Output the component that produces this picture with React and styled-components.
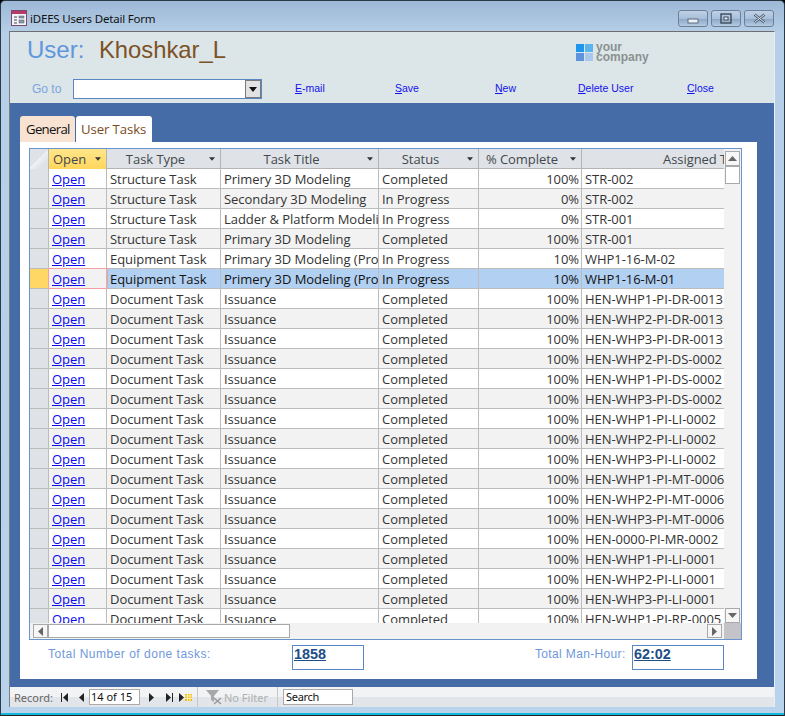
import React from 'react'
import styled, { createGlobalStyle } from 'styled-components'

const COLUMNS = '19px 58px 114px 158px 100px 103px 142px'

const doc = (code) => ({ type: 'Document Task', title: 'Issuance', status: 'Completed', pct: '100%', code })

const rows = [
  { type: 'Structure Task', title: 'Primery 3D Modeling', status: 'Completed', pct: '100%', code: 'STR-002' },
  { type: 'Structure Task', title: 'Secondary 3D Modeling', status: 'In Progress', pct: '0%', code: 'STR-002' },
  { type: 'Structure Task', title: 'Ladder & Platform Modeling', status: 'In Progress', pct: '0%', code: 'STR-001' },
  { type: 'Structure Task', title: 'Primary 3D Modeling', status: 'Completed', pct: '100%', code: 'STR-001' },
  { type: 'Equipment Task', title: 'Primary 3D Modeling (Process)', status: 'In Progress', pct: '10%', code: 'WHP1-16-M-02' },
  { type: 'Equipment Task', title: 'Primery 3D Modeling (Process)', status: 'In Progress', pct: '10%', code: 'WHP1-16-M-01', selected: true },
  doc('HEN-WHP1-PI-DR-0013'),
  doc('HEN-WHP2-PI-DR-0013'),
  doc('HEN-WHP3-PI-DR-0013'),
  doc('HEN-WHP2-PI-DS-0002'),
  doc('HEN-WHP1-PI-DS-0002'),
  doc('HEN-WHP3-PI-DS-0002'),
  doc('HEN-WHP1-PI-LI-0002'),
  doc('HEN-WHP2-PI-LI-0002'),
  doc('HEN-WHP3-PI-LI-0002'),
  doc('HEN-WHP1-PI-MT-0006'),
  doc('HEN-WHP2-PI-MT-0006'),
  doc('HEN-WHP3-PI-MT-0006'),
  doc('HEN-0000-PI-MR-0002'),
  doc('HEN-WHP1-PI-LI-0001'),
  doc('HEN-WHP2-PI-LI-0001'),
  doc('HEN-WHP3-PI-LI-0001'),
  doc('HEN-WHP1-PI-RP-0005'),
]

function App() {
  return (
    <Window>
      <GlobalStyle />
      <TitleBar>
        <FormIcon />
        <TitleText>iDEES Users Detail Form</TitleText>
        <WindowButtons>
          <WinButton>
            <MinIcon width="12" height="6"><rect x="1" y="1" width="10" height="4" fill="#eef2f7" stroke="#5a6a80" /></MinIcon>
          </WinButton>
          <WinButton>
            <svg width="12" height="11"><rect x="1" y="1" width="10" height="9" fill="none" stroke="#3c4a5c" strokeWidth="1.4" /><rect x="4" y="4" width="4" height="3" fill="#eef2f7" stroke="#3c4a5c" /></svg>
          </WinButton>
          <WinButton>
            <svg width="13" height="11"><path d="M1.5 1.5 L11.5 9.5 M11.5 1.5 L1.5 9.5" stroke="#4a5a70" strokeWidth="2.6" /><path d="M1.5 1.5 L11.5 9.5 M11.5 1.5 L1.5 9.5" stroke="#e8eef5" strokeWidth="1" /></svg>
          </WinButton>
        </WindowButtons>
      </TitleBar>
      <Form>
        <Header>
          <UserLine>
            <UserLabel>User:</UserLabel>
            <UserName>Khoshkar_L</UserName>
            <Logo>
              <LogoSquares>
                <i /><i /><i /><i />
              </LogoSquares>
              <LogoText>your<br />company</LogoText>
            </Logo>
          </UserLine>
          <ActionLine>
            <GoTo>Go to</GoTo>
            <Combo>
              <ComboArrow>
                <svg width="8" height="5"><path d="M0 0 H8 L4 5 Z" fill="#111" /></svg>
              </ComboArrow>
            </Combo>
            <ActionLink $width={100} $left={33}><u>E</u>-mail</ActionLink>
            <ActionLink $width={100}><u>S</u>ave</ActionLink>
            <ActionLink $width={83}><u>N</u>ew</ActionLink>
            <ActionLink $width={109}><u>D</u>elete User</ActionLink>
            <ActionLink $width={60}><u>C</u>lose</ActionLink>
          </ActionLine>
        </Header>
        <Detail>
          <Tabs>
            <Tab>General</Tab>
            <Tab $active>User Tasks</Tab>
          </Tabs>
          <Page>
            <Grid>
              <GridBody>
                <Table>
                  <HeadRow>
                    <Corner />
                    <HeadCell $current>Open<Sort /></HeadCell>
                    <HeadCell>Task Type<Sort /></HeadCell>
                    <HeadCell>Task Title<Sort /></HeadCell>
                    <HeadCell>Status<Sort /></HeadCell>
                    <HeadCell>% Complete<Sort /></HeadCell>
                    <AssignedHead>Assigned To</AssignedHead>
                  </HeadRow>
                  {rows.map((r, i) => (
                    <Row key={i} $alt={i % 2 === 1} $selected={r.selected}>
                      <Selector $selected={r.selected} />
                      <OpenCell $selected={r.selected}><OpenLink>Open</OpenLink></OpenCell>
                      <Cell>{r.type}</Cell>
                      <Cell>{r.title}</Cell>
                      <Cell>{r.status}</Cell>
                      <PctCell>{r.pct}</PctCell>
                      <Cell>{r.code}</Cell>
                    </Row>
                  ))}
                </Table>
                <VScroll>
                  <ScrollBtn><Tri viewBox="0 0 9 5"><path d="M0 5 L4.5 0 L9 5 Z" /></Tri></ScrollBtn>
                  <VThumb />
                  <ScrollGap />
                  <ScrollBtn><Tri viewBox="0 0 9 5"><path d="M0 0 L4.5 5 L9 0 Z" /></Tri></ScrollBtn>
                </VScroll>
              </GridBody>
              <HScroll>
                <HBtn><TriSide viewBox="0 0 5 9"><path d="M5 0 L0 4.5 L5 9 Z" /></TriSide></HBtn>
                <HThumb />
                <ScrollGap />
                <HBtn><TriSide viewBox="0 0 5 9"><path d="M0 0 L5 4.5 L0 9 Z" /></TriSide></HBtn>
                <ScrollCorner />
              </HScroll>
            </Grid>
            <Totals>
              <TotalLabel>Total Number of done tasks:</TotalLabel>
              <TotalBox $width={72}>1858</TotalBox>
              <ManHourLabel>Total Man-Hour:</ManHourLabel>
              <TotalBox $width={92}>62:02</TotalBox>
            </Totals>
          </Page>
        </Detail>
        <NavBar>
          <NavLabel>Record:</NavLabel>
          <NavIcon $left={8}><svg width="8" height="9"><path d="M0.5 0 V9" stroke="#222" /><path d="M7 0 V9 L2 4.5 Z" fill="#222" /></svg></NavIcon>
          <NavIcon $left={10}><svg width="6" height="9"><path d="M5 0 V9 L0 4.5 Z" fill="#222" /></svg></NavIcon>
          <RecordBox>14 of 15</RecordBox>
          <NavIcon $left={9}><svg width="6" height="9"><path d="M0 0 V9 L5 4.5 Z" fill="#222" /></svg></NavIcon>
          <NavIcon $left={10}><svg width="8" height="9"><path d="M7.5 0 V9" stroke="#222" /><path d="M1 0 V9 L6 4.5 Z" fill="#222" /></svg></NavIcon>
          <NavIcon $left={6}>
            <svg width="13" height="9"><path d="M0 0 V9 L5 4.5 Z" fill="#222" /><rect x="6" y="1" width="7" height="7" fill="#e8b820" /><path d="M6 3 H13 M6 5.5 H13 M8.5 1 V8 M11 1 V8" stroke="#fff2b0" /></svg>
          </NavIcon>
          <NavSep $left={5} />
          <NavIcon $left={8}>
            <svg width="16" height="16"><path d="M0 1 H13 L8 7 V13 L5 11 V7 Z" fill="#a8a8a8" /><path d="M8 9 L15 15 M15 9 L8 15" stroke="#999" strokeWidth="1.5" /></svg>
          </NavIcon>
          <NoFilter>No Filter</NoFilter>
          <NavSep $left={9} />
          <SearchBox>Search</SearchBox>
        </NavBar>
      </Form>
    </Window>
  )
}

function FormIcon() {
  return (
    <svg width="16" height="16" viewBox="0 0 16 16">
      <rect x="0.5" y="0.5" width="15" height="15" fill="#f4f5f8" stroke="#7a4a6a" />
      <rect x="1" y="1" width="14" height="3" fill="#b83a66" />
      <path d="M3 7 H6 M3 10 H6 M3 13 H6" stroke="#445" />
      <rect x="8" y="6" width="5" height="2" fill="#8a9ab0" stroke="#556" strokeWidth="0.5" />
      <rect x="8" y="10" width="5" height="3" fill="#8a9ab0" stroke="#556" strokeWidth="0.5" />
    </svg>
  )
}

function Sort() {
  return <SortMark viewBox="0 0 7 4"><path d="M0 0 H7 L3.5 4 Z" /></SortMark>
}

const GlobalStyle = createGlobalStyle`
  html, body {
    margin: 0;
    padding: 0;
    background: #000;
  }
`

const Window = styled.div`
  box-sizing: border-box;
  width: 785px;
  height: 716px;
  overflow: hidden;
  display: flex;
  flex-direction: column;
  padding: 0 9px 8px 8px;
  background: linear-gradient(#9db8d6 0, #b6cfe8 32px, #b9d3ec 100%);
  border: 1px solid #2c3a48;
  border-bottom-color: #222;
  box-shadow: inset 0 -2px 0 #14b8d8;
  border-radius: 5px 5px 0 0;
  font-family: 'Liberation Sans', Arial, sans-serif;
`

const TitleBar = styled.div`
  height: 30px;
  flex: none;
  box-sizing: border-box;
  display: flex;
  align-items: flex-start;
  padding: 9px 0 0 2px;
`

const TitleText = styled.span`
  margin-left: 3px;
  font: 11.5px/18px 'Noto Sans', sans-serif;
  letter-spacing: -0.2px;
  color: #111;
`

const WindowButtons = styled.div`
  margin-left: auto;
  margin-right: 1px;
  display: flex;
  gap: 3px;
`

const WinButton = styled.div`
  width: 30px;
  height: 17px;
  box-sizing: border-box;
  display: flex;
  align-items: center;
  justify-content: center;
  border: 1px solid #6d7f96;
  border-radius: 3px;
  background: linear-gradient(#bfd1e6 0, #a9c0da 50%, #8ea8c6 55%, #b5cbe2 100%);
`

const MinIcon = styled.svg`
  margin-top: 5px;
`

const Form = styled.div`
  flex: 1;
  min-height: 0;
  display: flex;
  flex-direction: column;
  border-top: 1px solid #6e6e6e;
  border-left: 1px solid #7d7d7d;
  border-right: 1px solid #e8eef4;
  background: #466ca8;
`

const Header = styled.div`
  height: 71px;
  flex: none;
  box-sizing: border-box;
  background: #dce5e7;
  padding-left: 17px;
`

const UserLine = styled.div`
  height: 47px;
  display: flex;
  align-items: flex-start;
`

const UserLabel = styled.span`
  font-size: 24px;
  line-height: 36px;
  color: #5f96de;
  width: 72px;
`

const UserName = styled.span`
  font-size: 23.8px;
  line-height: 36px;
  color: #7d5226;
`

const Logo = styled.div`
  margin: 10px 0 0 350px;
  display: flex;
  align-items: center;
  gap: 3px;
`

const LogoSquares = styled.div`
  display: grid;
  grid-template-columns: 8px 8px;
  grid-auto-rows: 8px;
  gap: 1px;
  i {
    display: block;
  }
  i:nth-child(1) {
    background: #1e96ee;
  }
  i:nth-child(2) {
    background: #5cb4ee;
  }
  i:nth-child(3) {
    background: #5f93dc;
  }
  i:nth-child(4) {
    background: #a8c8ec;
  }
`

const LogoText = styled.span`
  font-size: 12px;
  line-height: 10px;
  font-weight: bold;
  color: #8a9192;
`

const ActionLine = styled.div`
  display: flex;
  align-items: center;
  height: 20px;
`

const GoTo = styled.span`
  margin-left: 5px;
  width: 41px;
  font-size: 12px;
  color: #7ba3e2;
`

const Combo = styled.div`
  box-sizing: border-box;
  width: 189px;
  height: 20px;
  background: #fff;
  border: 1px solid #5a86c4;
  display: flex;
  justify-content: flex-end;
`

const ComboArrow = styled.div`
  width: 16px;
  box-sizing: border-box;
  background: #e2e2e2;
  border: 1px solid #7a7a7a;
  display: flex;
  align-items: center;
  justify-content: center;
`

const ActionLink = styled.a`
  flex: none;
  width: ${(p) => p.$width}px;
  margin-left: ${(p) => p.$left || 0}px;
  padding-bottom: 2px;
  font-size: 10.5px;
  color: #1212ee;
  text-decoration: none;
`

const Detail = styled.div`
  flex: 1;
  min-height: 0;
  display: flex;
  flex-direction: column;
  padding: 13px 0 8px 10px;
`

const Tabs = styled.div`
  height: 26px;
  flex: none;
  display: flex;
  align-items: flex-end;
  gap: 1px;
`

const Tab = styled.div`
  box-sizing: border-box;
  height: 26px;
  width: ${(p) => (p.$active ? 76 : 55)}px;
  padding-left: ${(p) => (p.$active ? 5 : 6)}px;
  white-space: nowrap;
  font: 13.2px/27px 'Open Sans', sans-serif;
  letter-spacing: ${(p) => (p.$active ? '-0.1px' : '-0.7px')};
  border-radius: 3px 3px 0 0;
  color: ${(p) => (p.$active ? '#7c4a1c' : '#111')};
  background: ${(p) => (p.$active ? '#fff' : '#f8e2d2')};
`

const Page = styled.div`
  width: 737px;
  flex: 1;
  min-height: 0;
  box-sizing: border-box;
  padding: 6px 0 0 9px;
  background: #fff;
`

const Grid = styled.div`
  width: 713px;
  height: 492px;
  box-sizing: border-box;
  border: 1px solid #6a94d0;
  display: flex;
  flex-direction: column;
  background: #f2f2f2;
`

const GridBody = styled.div`
  height: 474px;
  flex: none;
  display: flex;
`

const Table = styled.div`
  width: 694px;
  flex: none;
  overflow: hidden;
  background: #fff;
  font: 13px/21px 'Open Sans', sans-serif;
  letter-spacing: -0.05px;
  color: #333;
`

const HeadRow = styled.div`
  display: grid;
  grid-template-columns: ${COLUMNS};
  height: 20px;
  background: #dfe3e8;
  border-bottom: 1px solid #b4b4b4;
  box-sizing: border-box;
`

const Corner = styled.div`
  background: linear-gradient(135deg, #dfe3e8 50%, #f0f2f4 50%, #dfe3e8 75%);
  border-right: 1px solid #b4b4b4;
`

const HeadCell = styled.div`
  position: relative;
  text-align: center;
  line-height: 20px;
  padding-right: 16px;
  color: #44484e;
  white-space: nowrap;
  overflow: hidden;
  border-right: 1px solid #b4b4b4;
  background: ${(p) => (p.$current ? 'linear-gradient(#ffe68a, #ffd65c)' : 'transparent')};
`

const AssignedHead = styled.div`
  white-space: nowrap;
  padding-left: 81px;
  line-height: 20px;
  color: #44484e;
`

const SortMark = styled.svg`
  position: absolute;
  right: 5px;
  top: 8px;
  width: 6px;
  height: 4px;
  fill: #333;
`

const Row = styled.div`
  display: grid;
  grid-template-columns: ${COLUMNS};
  height: 20px;
  box-sizing: border-box;
  border-bottom: 1px solid #bcbcbc;
  background: ${(p) => (p.$selected ? '#b2d0f2' : p.$alt ? '#f2f2f2' : '#fff')};
  color: ${(p) => (p.$selected ? '#111' : '#333')};
`

const Selector = styled.div`
  background: ${(p) => (p.$selected ? '#ffd764' : '#dfe3e8')};
  border-right: 1px solid #bcbcbc;
`

const Cell = styled.div`
  padding: 0 0 0 3px;
  white-space: nowrap;
  overflow: hidden;
  border-right: 1px solid #bcbcbc;
  &:last-child {
    border-right: none;
  }
`

const PctCell = styled(Cell)`
  padding: 0 2px 0 0;
  text-align: right;
`

const OpenCell = styled(Cell)`
  position: relative;
  z-index: ${(p) => (p.$selected ? 1 : 'auto')};
  background: ${(p) => (p.$selected ? '#f2f2f2' : 'transparent')};
  outline: ${(p) => (p.$selected ? '1px solid #f2a0a6' : 'none')};
`

const OpenLink = styled.a`
  color: #0b0bee;
  text-decoration: underline;
`

const VScroll = styled.div`
  flex: 1;
  display: flex;
  flex-direction: column;
  align-items: center;
  padding-top: 2px;
  background: #f2f2f2;
`

const ScrollBtn = styled.div`
  width: 15px;
  height: 15px;
  box-sizing: border-box;
  flex: none;
  border: 1px solid #a9a9a9;
  background: #f6f6f6;
  display: flex;
  align-items: center;
  justify-content: center;
`

const Tri = styled.svg`
  width: 9px;
  height: 5px;
  fill: #666;
`

const TriSide = styled.svg`
  width: 5px;
  height: 9px;
  fill: #666;
`

const VThumb = styled.div`
  width: 15px;
  height: 18px;
  box-sizing: border-box;
  flex: none;
  background: #fff;
  border: 1px solid #a9a9a9;
`

const ScrollGap = styled.div`
  flex: 1;
`

const HScroll = styled.div`
  flex: 1;
  display: flex;
  align-items: flex-start;
  padding: 1px 0 0 3px;
  background: #f2f2f2;
`

const HBtn = styled.div`
  width: 15px;
  height: 14px;
  box-sizing: border-box;
  flex: none;
  border: 1px solid #a9a9a9;
  background: #f6f6f6;
  display: flex;
  align-items: center;
  justify-content: center;
`

const HThumb = styled.div`
  width: 242px;
  height: 14px;
  box-sizing: border-box;
  flex: none;
  background: #fff;
  border: 1px solid #a9a9a9;
`

const ScrollCorner = styled.div`
  width: 17px;
  height: 16px;
  margin: -1px 0 0 2px;
  flex: none;
  background: #c4c4c8;
`

const Totals = styled.div`
  display: flex;
  align-items: flex-start;
  margin-top: 5px;
  padding-left: 19px;
  font-size: 12px;
  color: #6f98dc;
`

const TotalLabel = styled.span`
  width: 244px;
  letter-spacing: 0.5px;
  margin-top: 2px;
`

const ManHourLabel = styled.span`
  width: 97px;
  margin-left: 171px;
  letter-spacing: 0.35px;
  margin-top: 2px;
  white-space: nowrap;
`

const TotalBox = styled.div`
  box-sizing: border-box;
  width: ${(p) => p.$width}px;
  height: 25px;
  padding: 0 1px;
  border: 1px solid #5a86c4;
  font-size: 14.4px;
  font-weight: bold;
  color: #1e4e86;
  text-decoration: underline;
`

const NavBar = styled.div`
  height: 20px;
  flex: none;
  display: flex;
  align-items: center;
  padding-left: 4px;
  background: linear-gradient(#f2f3f5 0, #f2f3f5 50%, #e2e5e9 52%, #e2e5e9 100%);
  font: 11px 'Noto Sans', sans-serif;
`

const NavLabel = styled.span`
  width: 39px;
  color: #666;
`

const NavIcon = styled.span`
  display: flex;
  margin-left: ${(p) => p.$left}px;
`

const RecordBox = styled.div`
  box-sizing: border-box;
  width: 51px;
  height: 16px;
  margin-left: 4px;
  padding-left: 1px;
  line-height: 14px;
  background: #fff;
  border: 1px solid #aaa;
  color: #111;
  white-space: nowrap;
`

const NavSep = styled.div`
  width: 1px;
  height: 20px;
  margin-left: ${(p) => p.$left}px;
  background: #c8c8c8;
`

const NoFilter = styled.span`
  width: 44px;
  margin-left: 2px;
  color: #b0b0b0;
  white-space: nowrap;
`

const SearchBox = styled.div`
  box-sizing: border-box;
  width: 70px;
  height: 16px;
  margin-left: 5px;
  padding-left: 2px;
  line-height: 14px;
  letter-spacing: -0.3px;
  background: #fff;
  border: 1px solid #aaa;
  color: #111;
`

export default App
